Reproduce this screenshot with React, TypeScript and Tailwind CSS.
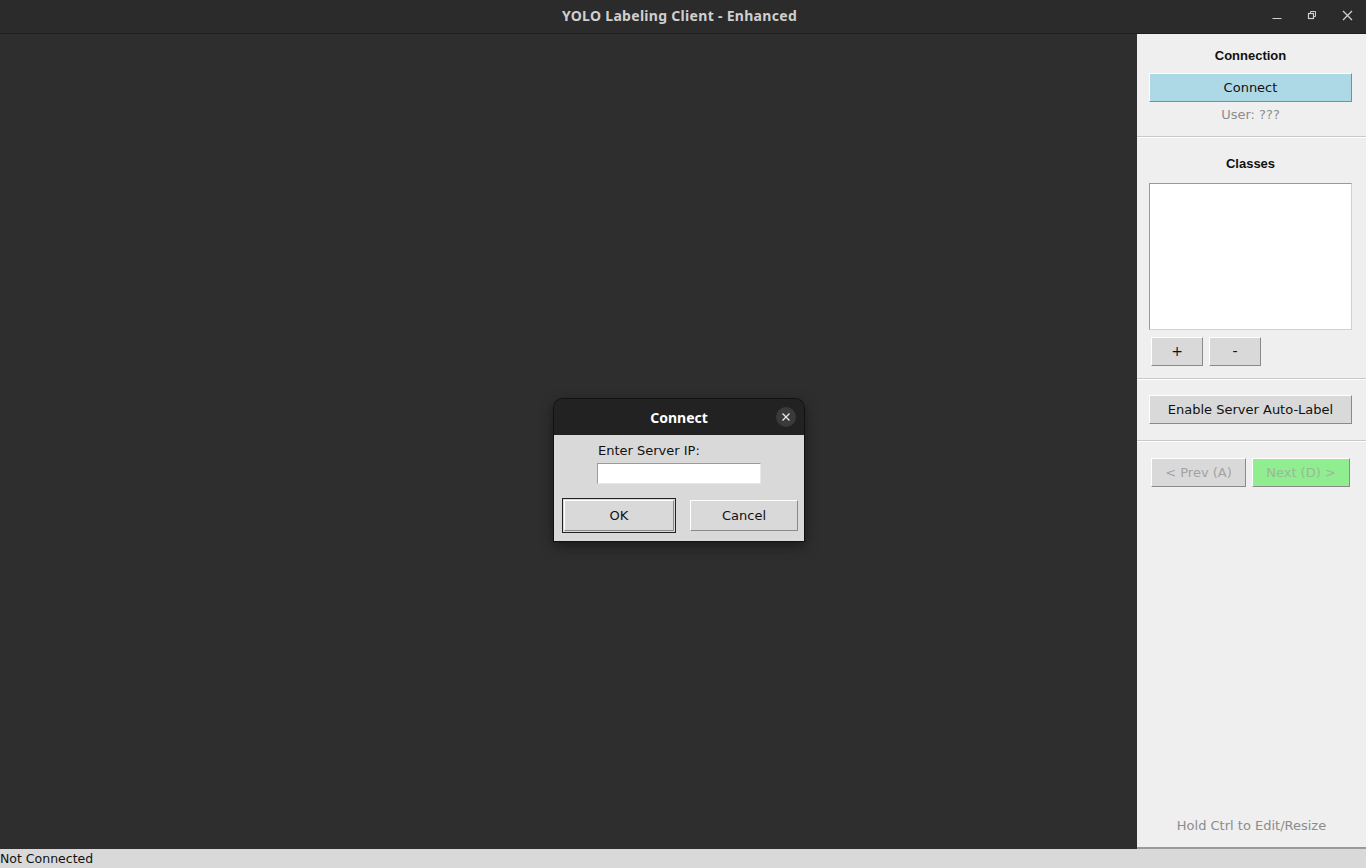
import React from 'react';

const tk = "font-['DejaVu_Sans',sans-serif]";

function TkButton({
	className = '',
	children,
}: {
	className?: string;
	children: React.ReactNode;
}) {
	return (
		<div
			className={`flex items-center justify-center border border-t-white border-l-white border-b-[#8a8a8a] border-r-[#8a8a8a] text-[13px] ${className}`}
		>
			{children}
		</div>
	);
}

function Separator() {
	return <div className="h-[2px] bg-[#c9c9c9] border-b border-white" />;
}

export default function App() {
	return (
		<div className={`relative w-[1366px] h-[868px] flex flex-col overflow-hidden bg-[#2e2e2e] ${tk}`}>
			{/* Title bar */}
			<div className="h-[34px] shrink-0 flex items-center justify-center relative bg-[#2b2b2b] border-b border-[#1f1f1f] pb-[3px] pr-[7px]">
				<span className="text-[14px] font-bold text-[#cfcfcf] font-['Noto_Sans',sans-serif] tracking-[0.3px]">
					YOLO Labeling Client - Enhanced
				</span>
				<div className="absolute right-[13px] top-0 h-full flex items-center gap-[25px] text-[#cfcfcf] pb-[3px]">
					<svg width="10" height="10" viewBox="0 0 10 10">
						<path d="M0.5 8.5 H9.5" stroke="currentColor" strokeWidth="1" />
					</svg>
					<svg width="10" height="10" viewBox="0 0 10 10">
						<rect x="1.5" y="3.5" width="5" height="5" fill="none" stroke="currentColor" strokeWidth="1.2" />
						<path d="M3.5 3.5 V1.5 H8.5 V6.5 H6.5" fill="none" stroke="currentColor" strokeWidth="1" />
					</svg>
					<svg width="11" height="11" viewBox="0 0 11 11">
						<path d="M1 1 L10 10 M10 1 L1 10" stroke="currentColor" strokeWidth="1.3" />
					</svg>
				</div>
			</div>

			{/* Main */}
			<div className="flex flex-1 min-h-0">
				<div className="flex-1 bg-[#2e2e2e]" />
				<div className="w-[229px] shrink-0 bg-[#efefef] border-b-2 border-[#9a9a9a] flex flex-col">
					{/* Connection */}
					<div className="flex flex-col pl-[12px] pr-[14px] pt-[12px] pb-[12px]">
						<div className="text-center text-[13px] font-bold text-[#111] font-['Liberation_Sans',sans-serif] h-[20px] leading-[20px]">
							Connection
						</div>
						<TkButton className="mt-[7px] h-[29px] bg-[#add8e6] border-b-[#5f7f8a] border-r-[#5f7f8a] text-[#111]">
							Connect
						</TkButton>
						<div className="text-center text-[13px] text-[#8c8c8c] mt-[4px] h-[18px] leading-[18px]">
							User: ???
						</div>
					</div>
					<Separator />

					{/* Classes */}
					<div className="flex flex-col pl-[12px] pr-[14px] pt-[16px] pb-[12px]">
						<div className="text-center text-[13px] font-bold text-[#111] font-['Liberation_Sans',sans-serif] h-[20px] leading-[20px]">
							Classes
						</div>
						<div className="mt-[9px] h-[147px] bg-white border border-t-[#9a9a9a] border-l-[#9a9a9a] border-b-[#d0d0d0] border-r-[#d0d0d0]" />
						<div className="flex gap-[6px] mt-[7px] pl-[2px]">
							<TkButton className="w-[52px] h-[29px] bg-[#d9d9d9] text-[#111] text-[14px]">+</TkButton>
							<TkButton className="w-[52px] h-[29px] bg-[#d9d9d9] text-[#111] text-[14px]">-</TkButton>
						</div>
					</div>
					<Separator />

					{/* Auto label */}
					<div className="pl-[12px] pr-[14px] pt-[15px] pb-[16px]">
						<TkButton className="h-[29px] bg-[#d9d9d9] text-[#111]">Enable Server Auto-Label</TkButton>
					</div>
					<Separator />

					{/* Navigation */}
					<div className="flex gap-[6px] px-[14px] pt-[16px]">
						<TkButton className="w-[95px] h-[29px] bg-[#d9d9d9] text-[#a3a3a3]">&lt; Prev (A)</TkButton>
						<TkButton className="w-[98px] h-[29px] bg-[#90ee90] text-[#9ab89a]">Next (D) &gt;</TkButton>
					</div>

					<div className="flex-1" />
					<div className="text-center text-[13px] text-[#8c8c8c] pb-[12px]">Hold Ctrl to Edit/Resize</div>
				</div>
			</div>

			{/* Status bar */}
			<div className="h-[19px] shrink-0 bg-[#d9d9d9] text-[12.5px] text-[#111] leading-[19px]">
				Not Connected
			</div>

			{/* Dialog */}
			<div className="absolute left-[554px] top-[399px] w-[250px] rounded-t-[9px] overflow-hidden shadow-[0_0_0_1px_#111,0_4px_14px_rgba(0,0,0,0.5)]">
				<div className="h-[36px] bg-[#222222] flex items-center justify-center relative">
					<span className="text-[14px] font-bold text-white font-['Noto_Sans',sans-serif]">Connect</span>
					<div className="absolute right-[8px] top-[8px] w-[20px] h-[20px] rounded-full bg-[#3a3a3a] flex items-center justify-center">
						<svg width="10" height="10" viewBox="0 0 10 10">
							<path d="M1.5 1.5 L8.5 8.5 M8.5 1.5 L1.5 8.5" stroke="#e8e8e8" strokeWidth="1.3" />
						</svg>
					</div>
				</div>
				<div className="bg-[#d9d9d9] h-[106px] flex flex-col">
					<div className="pl-[44px] pt-[6px] text-[13px] text-[#111] h-[24px] leading-[20px]">Enter Server IP:</div>
					<div className="ml-[43px] mt-[4px] w-[164px] h-[21px] bg-white border border-t-[#9a9a9a] border-l-[#9a9a9a] border-b-[#e8e8e8] border-r-[#e8e8e8]" />
					<div className="flex justify-between px-[8px] mt-[14px]">
						<div className="border border-[#222] p-[1px]">
							<TkButton className="w-[110px] h-[31px] bg-[#d9d9d9] text-[#111]">OK</TkButton>
						</div>
						<TkButton className="w-[108px] h-[31px] mt-[2px] mr-[-2px] bg-[#d9d9d9] text-[#111]">Cancel</TkButton>
					</div>
				</div>
			</div>
		</div>
	);
}
